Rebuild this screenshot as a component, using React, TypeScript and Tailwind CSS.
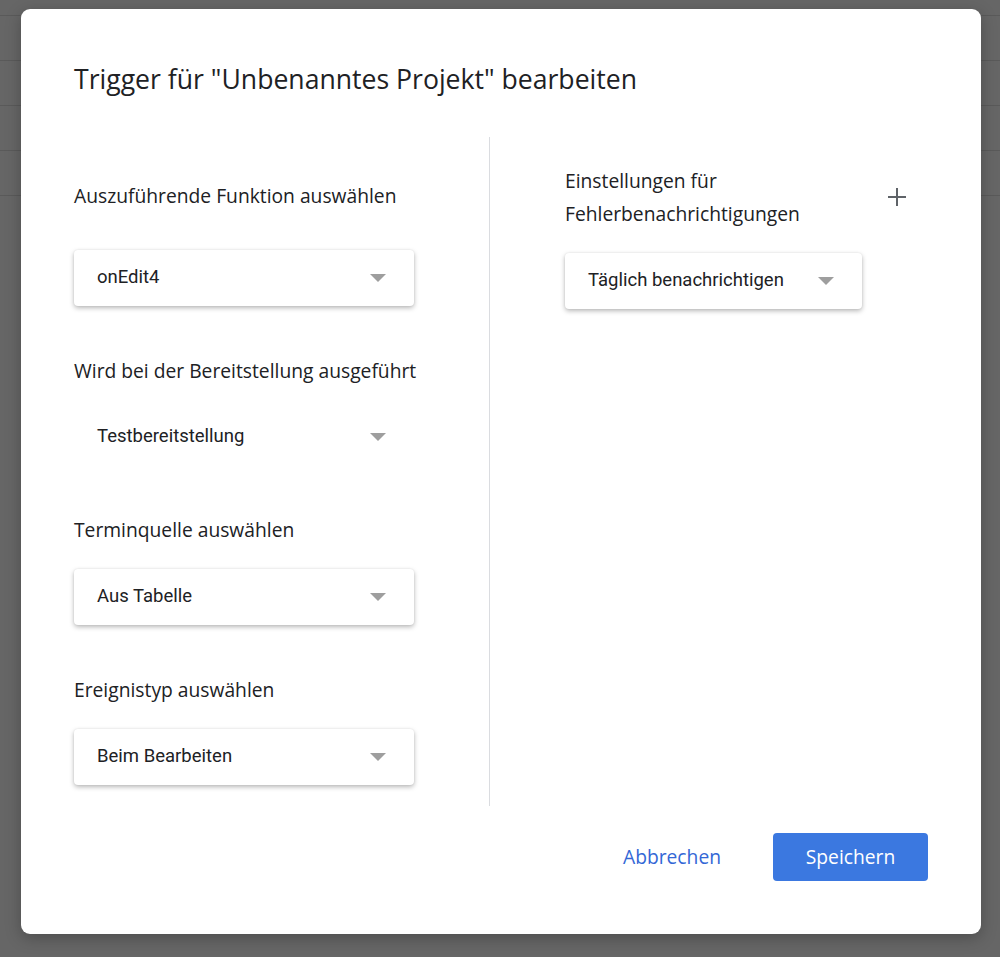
const heading = { fontFamily: '"Open Sans", "Noto Sans", sans-serif' };
const roboto = { fontFamily: 'Roboto, "Liberation Sans", sans-serif' };

function Caret() {
  return (
    <svg width="16" height="8" viewBox="0 0 16 8" className="shrink-0">
      <path d="M0 0h16L8 8z" fill="#9e9e9e" />
    </svg>
  );
}

function Select({ value, flat = false, width = 'w-[340px]' }: { value: string; flat?: boolean; width?: string }) {
  return (
    <div
      className={`${width} h-[56px] rounded-[4px] bg-white flex items-center justify-between pl-[23px] pr-[28px] ${
        flat ? '' : 'shadow-[0_2px_5px_rgba(0,0,0,0.28),0_0_2px_rgba(0,0,0,0.08)]'
      }`}
    >
      <span className="text-[18.5px] text-[#202124]" style={roboto}>
        {value}
      </span>
      <Caret />
    </div>
  );
}

function Label({ children, className = '' }: { children: string; className?: string }) {
  return (
    <p className={`text-[19.25px] leading-[33px] text-[#202124] ${className}`} style={heading}>
      {children}
    </p>
  );
}

export default function App() {
  return (
    <div className="relative w-[1000px] h-[957px] bg-[#666666] overflow-hidden">
      {/* sheet rows behind the overlay */}
      <div className="pt-[15px]">
        {[0, 1, 2, 3, 4].map((i) => (
          <div key={i} className="h-[45px] border-t border-[#5a5a5a]" />
        ))}
      </div>

      <div className="absolute left-[21px] top-[9px] w-[960px] h-[925px] rounded-[9px] bg-white shadow-[0_4px_16px_rgba(0,0,0,0.25)] flex flex-col px-[53px]">
        <h1 className="mt-[54px] text-[26.6px] leading-[32px] text-[#202124]" style={heading}>
          Trigger für "Unbenanntes Projekt" bearbeiten
        </h1>

        <div className="flex mt-[42px]">
          <div className="w-[415px] pt-[42px] pb-[21px]">
            <Label>Auszuführende Funktion auswählen</Label>
            <div className="mt-[38px]">
              <Select value="onEdit4" />
            </div>

            <Label className="mt-[48px]">Wird bei der Bereitstellung ausgeführt</Label>
            <div className="mt-[22px]">
              <Select value="Testbereitstellung" flat />
            </div>

            <Label className="mt-[48px]">Terminquelle auswählen</Label>
            <div className="mt-[23px]">
              <Select value="Aus Tabelle" />
            </div>

            <Label className="mt-[48px]">Ereignistyp auswählen</Label>
            <div className="mt-[23px]">
              <Select value="Beim Bearbeiten" />
            </div>
          </div>

          <div className="w-px bg-[#dadce0]" />

          <div className="flex-1 pl-[75px] pt-[27px]">
            <div className="flex items-center justify-between pr-[21px]">
              <div>
                <Label>Einstellungen für</Label>
                <Label>Fehlerbenachrichtigungen</Label>
              </div>
              <svg width="20" height="20" viewBox="0 0 20 20">
                <path d="M10 1v18M1 10h18" stroke="#5f6368" strokeWidth="2" />
              </svg>
            </div>
            <div className="mt-[23px]">
              <Select value="Täglich benachrichtigen" width="w-[297px]" />
            </div>
          </div>
        </div>

        <div className="flex justify-end items-center gap-[52px] mt-[27px]">
          <button className="text-[19.25px] font-medium text-[#3367d6]" style={heading}>
            Abbrechen
          </button>
          <button
            className="w-[155px] h-[48px] rounded-[4px] bg-[#3b78e0] text-white text-[19.25px] font-medium"
            style={heading}
          >
            Speichern
          </button>
        </div>
      </div>
    </div>
  );
}
